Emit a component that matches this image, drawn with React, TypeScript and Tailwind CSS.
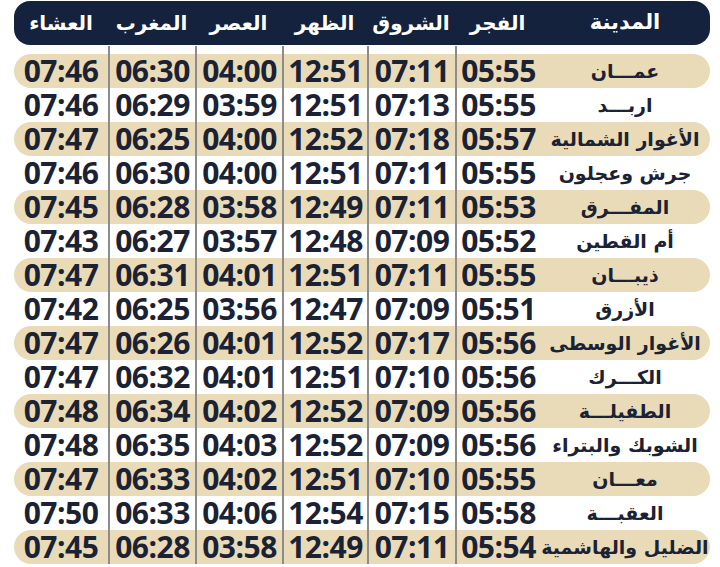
import React from "react";

const cities: [string, string[]][] = [
  ["عمـــان", ["05:55", "07:11", "12:51", "04:00", "06:30", "07:46"]],
  ["اربـــد", ["05:55", "07:13", "12:51", "03:59", "06:29", "07:46"]],
  ["الأغوار الشمالية", ["05:57", "07:18", "12:52", "04:00", "06:25", "07:47"]],
  ["جرش وعجلون", ["05:55", "07:11", "12:51", "04:00", "06:30", "07:46"]],
  ["المفـــرق", ["05:53", "07:11", "12:49", "03:58", "06:28", "07:45"]],
  ["أم القطين", ["05:52", "07:09", "12:48", "03:57", "06:27", "07:43"]],
  ["ذيبـــان", ["05:55", "07:11", "12:51", "04:01", "06:31", "07:47"]],
  ["الأزرق", ["05:51", "07:09", "12:47", "03:56", "06:25", "07:42"]],
  ["الأغوار الوسطى", ["05:56", "07:17", "12:52", "04:01", "06:26", "07:47"]],
  ["الكـــرك", ["05:56", "07:10", "12:51", "04:01", "06:32", "07:47"]],
  ["الطفيلـــة", ["05:56", "07:09", "12:52", "04:02", "06:34", "07:48"]],
  ["الشوبك والبتراء", ["05:56", "07:09", "12:52", "04:03", "06:35", "07:48"]],
  ["معـــان", ["05:55", "07:10", "12:51", "04:02", "06:33", "07:47"]],
  ["العقبـــة", ["05:58", "07:15", "12:54", "04:06", "06:33", "07:50"]],
  ["الضليل والهاشمية", ["05:54", "07:11", "12:49", "03:58", "06:28", "07:45"]],
];

const headers = ["الفجر", "الشروق", "الظهر", "العصر", "المغرب", "العشاء"];
// column widths right-to-left, after the city column
const widths = ["w-[85px]", "w-[88px]", "w-[85px]", "w-[87px]", "w-[87px]", "w-[94px]"];

const arabic = { fontFamily: '"DejaVu Sans", sans-serif' };
const digits = { fontFamily: '"Open Sans", "Liberation Sans", sans-serif' };

export default function App() {
  return (
    <div dir="rtl" className="w-[720px] h-[567px] bg-white overflow-hidden pt-[1px] pr-[10px] pl-[14px]">
      {/* header */}
      <div className="flex h-[44px] items-center rounded-2xl bg-[#14223d] text-white" style={arabic}>
        <div className="w-[170px] text-center text-[21px] font-bold">المدينة</div>
        {headers.map((h, i) => (
          <div key={h} className={`${widths[i]} text-center text-[20px] font-bold`}>{h}</div>
        ))}
      </div>

      {/* spacer carrying the column lines down under the header */}
      <div className="flex h-[8px] mt-[1px]">
        <div className="w-[170px]" />
        {widths.map((w, i) => (
          <div key={i} className={`${w} ${i < 5 ? "border-l-2 border-[#8c8c8c]" : ""}`} />
        ))}
      </div>

      {cities.map(([name, times], r) => (
        <div
          key={name}
          className={`flex h-[34px] items-center rounded-full text-[#1b2233] ${r % 2 === 0 ? "bg-[#e9dbb8]" : ""}`}
        >
          <div className="w-[170px] text-center text-[19px] font-bold leading-none" style={arabic}>{name}</div>
          {times.map((t, i) => (
            <div
              key={i}
              dir="ltr"
              className={`${widths[i]} h-full flex items-center justify-center text-[30px] font-bold leading-none tracking-[-0.5px] ${i < 5 ? "border-l-2 border-[#8c8c8c]" : ""}`}
              style={digits}
            >
              {t}
            </div>
          ))}
        </div>
      ))}
    </div>
  );
}
